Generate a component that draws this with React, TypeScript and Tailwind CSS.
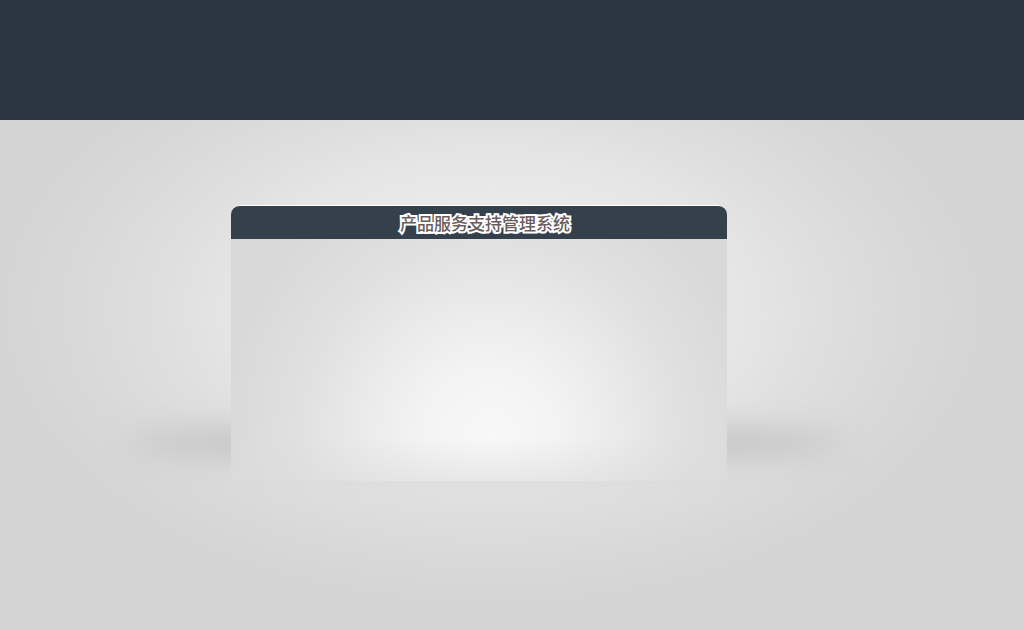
export default function App() {
  return (
    <div className="flex min-h-screen flex-col bg-[#d4d4d4] font-['Noto_Sans_CJK_SC','Liberation_Sans',sans-serif]">
      <header className="h-[120px] bg-[#293541]" />
      <main className="flex grow justify-center bg-[radial-gradient(ellipse_500px_300px_at_48%_190px,#f0f0f0_0%,#eaeaea_35%,#e5e5e5_52%,#dfdfdf_65%,#d8d8d8_85%,#d4d4d4_100%)] pt-[85px] pr-[66px] pb-8">
        <section aria-labelledby="system-title" className="relative h-fit w-[496px]">
          <div
            aria-hidden="true"
            className="absolute -right-[116px] bottom-4 -left-[104px] h-11 rounded-[50%] bg-[#c6c6c6] blur-[14px]"
          />
          <div className="relative">
            <div className="flex h-[34px] items-center justify-center rounded-t-[9px] border-t border-white bg-[#34404c] pl-3">
              <h1
                id="system-title"
                className="text-[17px] leading-6 font-medium text-[#6b5c5c] [-webkit-text-stroke:4px_#fff] [paint-order:stroke_fill]"
              >
                产品服务支持管理系统
              </h1>
            </div>
            <div className="h-[242px] bg-[linear-gradient(to_bottom,rgba(220,220,220,0)_82%,rgba(220,220,220,0.55)_100%),radial-gradient(ellipse_275px_290px_at_259px_201px,#f8f8f8_0%,#f3f3f3_25%,#ebebeb_45%,#e0e0e0_70%,#d8d8d8_100%)]" />
          </div>
        </section>
      </main>
    </div>
  );
}
